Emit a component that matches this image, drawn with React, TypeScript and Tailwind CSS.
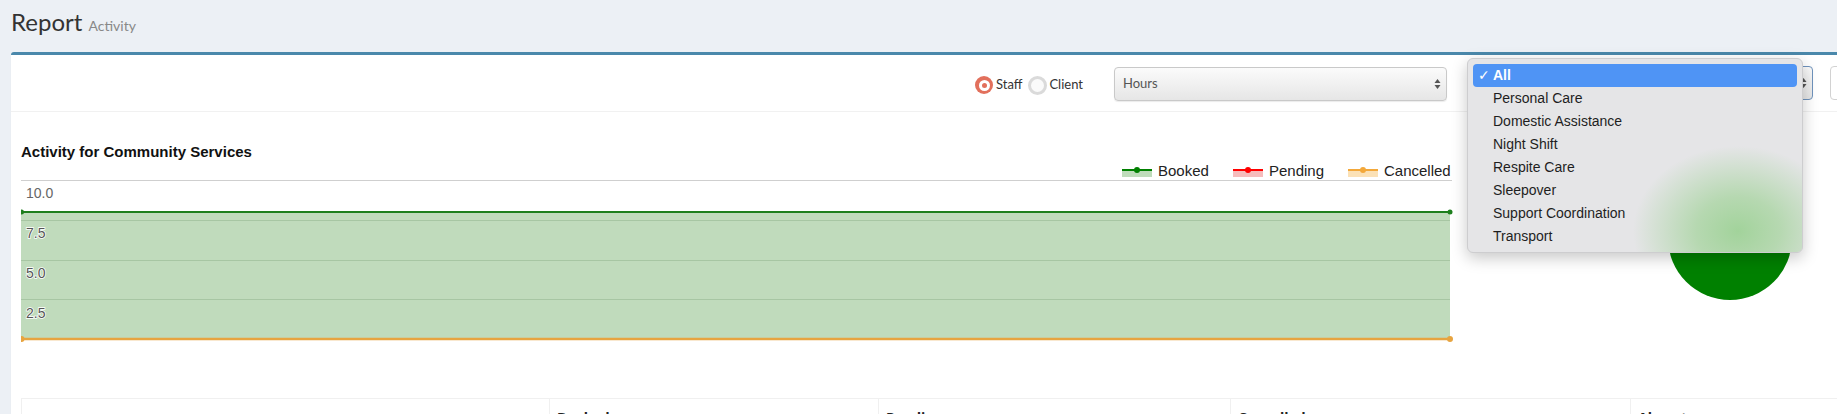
import React from 'react';

const services = [
  'Personal Care',
  'Domestic Assistance',
  'Night Shift',
  'Respite Care',
  'Sleepover',
  'Support Coordination',
  'Transport',
];

function SelectArrows({ className = '' }: { className?: string }) {
  return (
    <svg width="7" height="12" viewBox="0 0 7 12" className={className}>
      <path d="M3.5 1 L6.5 5 H0.5 Z" fill="#555" />
      <path d="M3.5 11 L6.5 7 H0.5 Z" fill="#555" />
    </svg>
  );
}

function ActivityChart() {
  const font = "'Liberation Sans', Arial, sans-serif";
  const legend = [
    { x: 1101, label: 'Booked', line: '#008000', fill: '#bfdcbb' },
    { x: 1212, label: 'Pending', line: '#ff0000', fill: '#f6bcbc' },
    { x: 1327, label: 'Cancelled', line: '#f3a83a', fill: '#fbe1b6' },
  ];
  const labels = [
    { y: 37, t: '10.0' },
    { y: 77, t: '7.5' },
    { y: 117, t: '5.0' },
    { y: 157, t: '2.5' },
  ];
  return (
    <svg width="1432" height="186" viewBox="0 0 1432 186" className="block">
      {/* legend */}
      {legend.map((l) => (
        <g key={l.label}>
          <rect x={l.x} y={9} width={30} height={7} fill={l.fill} />
          <line x1={l.x} x2={l.x + 30} y1={9} y2={9} stroke={l.line} strokeWidth={2} />
          <circle cx={l.x + 15} cy={9} r={3} fill={l.line} />
          <text x={l.x + 36} y={14.5} fontFamily={font} fontSize={15} fill="#222">
            {l.label}
          </text>
        </g>
      ))}
      {/* top grid line */}
      <line x1={0} x2={1431} y1={19.5} y2={19.5} stroke="#cfcfcf" strokeWidth={1} />
      {/* booked area */}
      <rect x={0} y={51} width={1429} height={127} fill="#c0dbbc" />
      {[59.5, 99.5, 138.5].map((y) => (
        <line key={y} x1={0} x2={1429} y1={y} y2={y} stroke="#a7c6a3" strokeWidth={1} />
      ))}
      <line x1={0} x2={1429} y1={51} y2={51} stroke="#1d7f1d" strokeWidth={2} />
      <circle cx={0.5} cy={51} r={2.5} fill="#1d7f1d" />
      <circle cx={1429} cy={51} r={2.5} fill="#1d7f1d" />
      {/* cancelled at zero */}
      <line x1={0} x2={1429} y1={178} y2={178} stroke="#e7a440" strokeWidth={2.5} />
      <circle cx={0.5} cy={178} r={3} fill="#e7a440" />
      <circle cx={1429} cy={178} r={3} fill="#e7a440" />
      {labels.map((l, i) => (
        <text
          key={l.t}
          x={5}
          y={l.y}
          fontFamily={font}
          fontSize={14}
          fill={i === 0 ? '#666' : '#555'}
          stroke={i === 0 ? 'none' : '#ffffff'}
          strokeWidth={1.5}
          paintOrder="stroke"
        >
          {l.t}
        </text>
      ))}
    </svg>
  );
}

function App() {
  return (
    <div className="relative w-full h-[414px] overflow-hidden bg-[#ecf0f5] font-['Lato','Open_Sans',sans-serif] text-[#333]">
      {/* Page header */}
      <div className="h-[52px] pl-[11px] pt-[8px]">
        <h1 className="text-[24px] leading-[28px] text-[#333] font-normal">
          Report <span className="text-[14px] text-[#888]">Activity</span>
        </h1>
      </div>

      {/* Box */}
      <div className="ml-[11px] w-[2050px] bg-white border-t-[3px] border-[#4a88ab] rounded-t-[3px] shadow-[0_1px_1px_rgba(0,0,0,0.1)]">
        {/* Toolbar */}
        <div className="h-[57px] border-b border-[#f1f1f1] flex items-center pl-[964px] pt-[1px]">
          <span className="shrink-0 w-[18px] h-[18px] rounded-full bg-[#e2705c] flex items-center justify-center mt-[3px]">
            <span className="w-[11px] h-[11px] rounded-full bg-white flex items-center justify-center">
              <span className="w-[5px] h-[5px] rounded-full bg-[#e2705c]" />
            </span>
          </span>
          <span className="shrink-0 ml-[3px] text-[13px] text-[#333] mt-[2px]">Staff</span>
          <span className="shrink-0 ml-[6px] w-[19px] h-[19px] rounded-full border-[3px] border-[#dadada] bg-[#fafafa] mt-[3px]" />
          <span className="shrink-0 ml-[2px] text-[13px] text-[#333] mt-[2px]">Client</span>

          <div className="shrink-0 ml-[31px] w-[333px] h-[34px] rounded-[4px] border border-[#c9c9c9] bg-[linear-gradient(#fbfbfb,#e6e6e6)] shadow-[0_1px_1px_rgba(0,0,0,0.08)] flex items-center justify-between pl-[8px] pr-[5px]">
            <span className="text-[13px] text-[#555]">Hours</span>
            <SelectArrows />
          </div>

          <div className="shrink-0 ml-[26px] w-[340px] h-[34px] rounded-[4px] border border-[#6f93bd] bg-[linear-gradient(#fbfbfb,#e6e6e6)] flex items-center justify-end pr-[5px] -mt-[2px]">
            <SelectArrows />
          </div>

          <div className="shrink-0 ml-[17px] w-[200px] h-[34px] rounded-[4px] border border-[#d2d2d2] bg-white -mt-[2px]" />
        </div>

        {/* Body */}
        <div className="px-[10px] pt-[31px]">
          <div className="flex">
            <div className="shrink-0 w-[1432px]">
              <h3 className="font-['Liberation_Sans',Arial,sans-serif] font-bold text-[15px] leading-[18px] text-[#111]">
                Activity for Community Services
              </h3>
              <ActivityChart />
            </div>
            <div className="shrink-0 ml-[215px] mt-[33px]">
              <div className="w-[124px] h-[124px] rounded-full bg-[#008000]" />
            </div>
          </div>

          {/* Table */}
          <div className="mt-[51px] grid grid-cols-[527px_329px_352px_400px_1fr] border border-[#f0f0f0] text-[14px] font-bold text-[#222] font-['Open_Sans',sans-serif]">
            <div className="px-[8px] py-[8px] h-[38px]" />
            <div className="px-[7px] py-[8px] border-l border-[#f0f0f0]">Booked</div>
            <div className="px-[7px] py-[8px] border-l border-[#f0f0f0]">Pending</div>
            <div className="px-[7px] py-[8px] border-l border-[#f0f0f0]">Cancelled</div>
            <div className="px-[7px] py-[8px] border-l border-[#f0f0f0]">Absent</div>
          </div>
        </div>
      </div>

      {/* Open select menu */}
      <div className="absolute left-[1467px] top-[58px] w-[336px] h-[195px] rounded-[6px] bg-[#e5e5e7] border border-[#cdcdcf] shadow-[0_5px_16px_rgba(0,0,0,0.22)] overflow-hidden font-['Liberation_Sans',Arial,sans-serif] text-[14px]">
        <div className="absolute inset-0 bg-[radial-gradient(ellipse_105px_85px_at_270px_172px,#a2d39b_0%,rgba(170,213,163,0.8)_40%,rgba(229,229,231,0)_100%)]" />
        <div className="relative pt-[5px] px-[5px]">
          <div className="h-[23px] rounded-[4px] bg-[#4f94f5] text-white flex items-center">
            <span className="w-[20px] pl-[5px] text-[14px] font-['DejaVu_Sans',sans-serif]">✓</span>
            <span className="font-semibold">All</span>
          </div>
          {services.map((s) => (
            <div key={s} className="h-[23px] flex items-center pl-[20px] text-[#1e1e1e]">
              {s}
            </div>
          ))}
        </div>
      </div>
    </div>
  );
}

export default App;
